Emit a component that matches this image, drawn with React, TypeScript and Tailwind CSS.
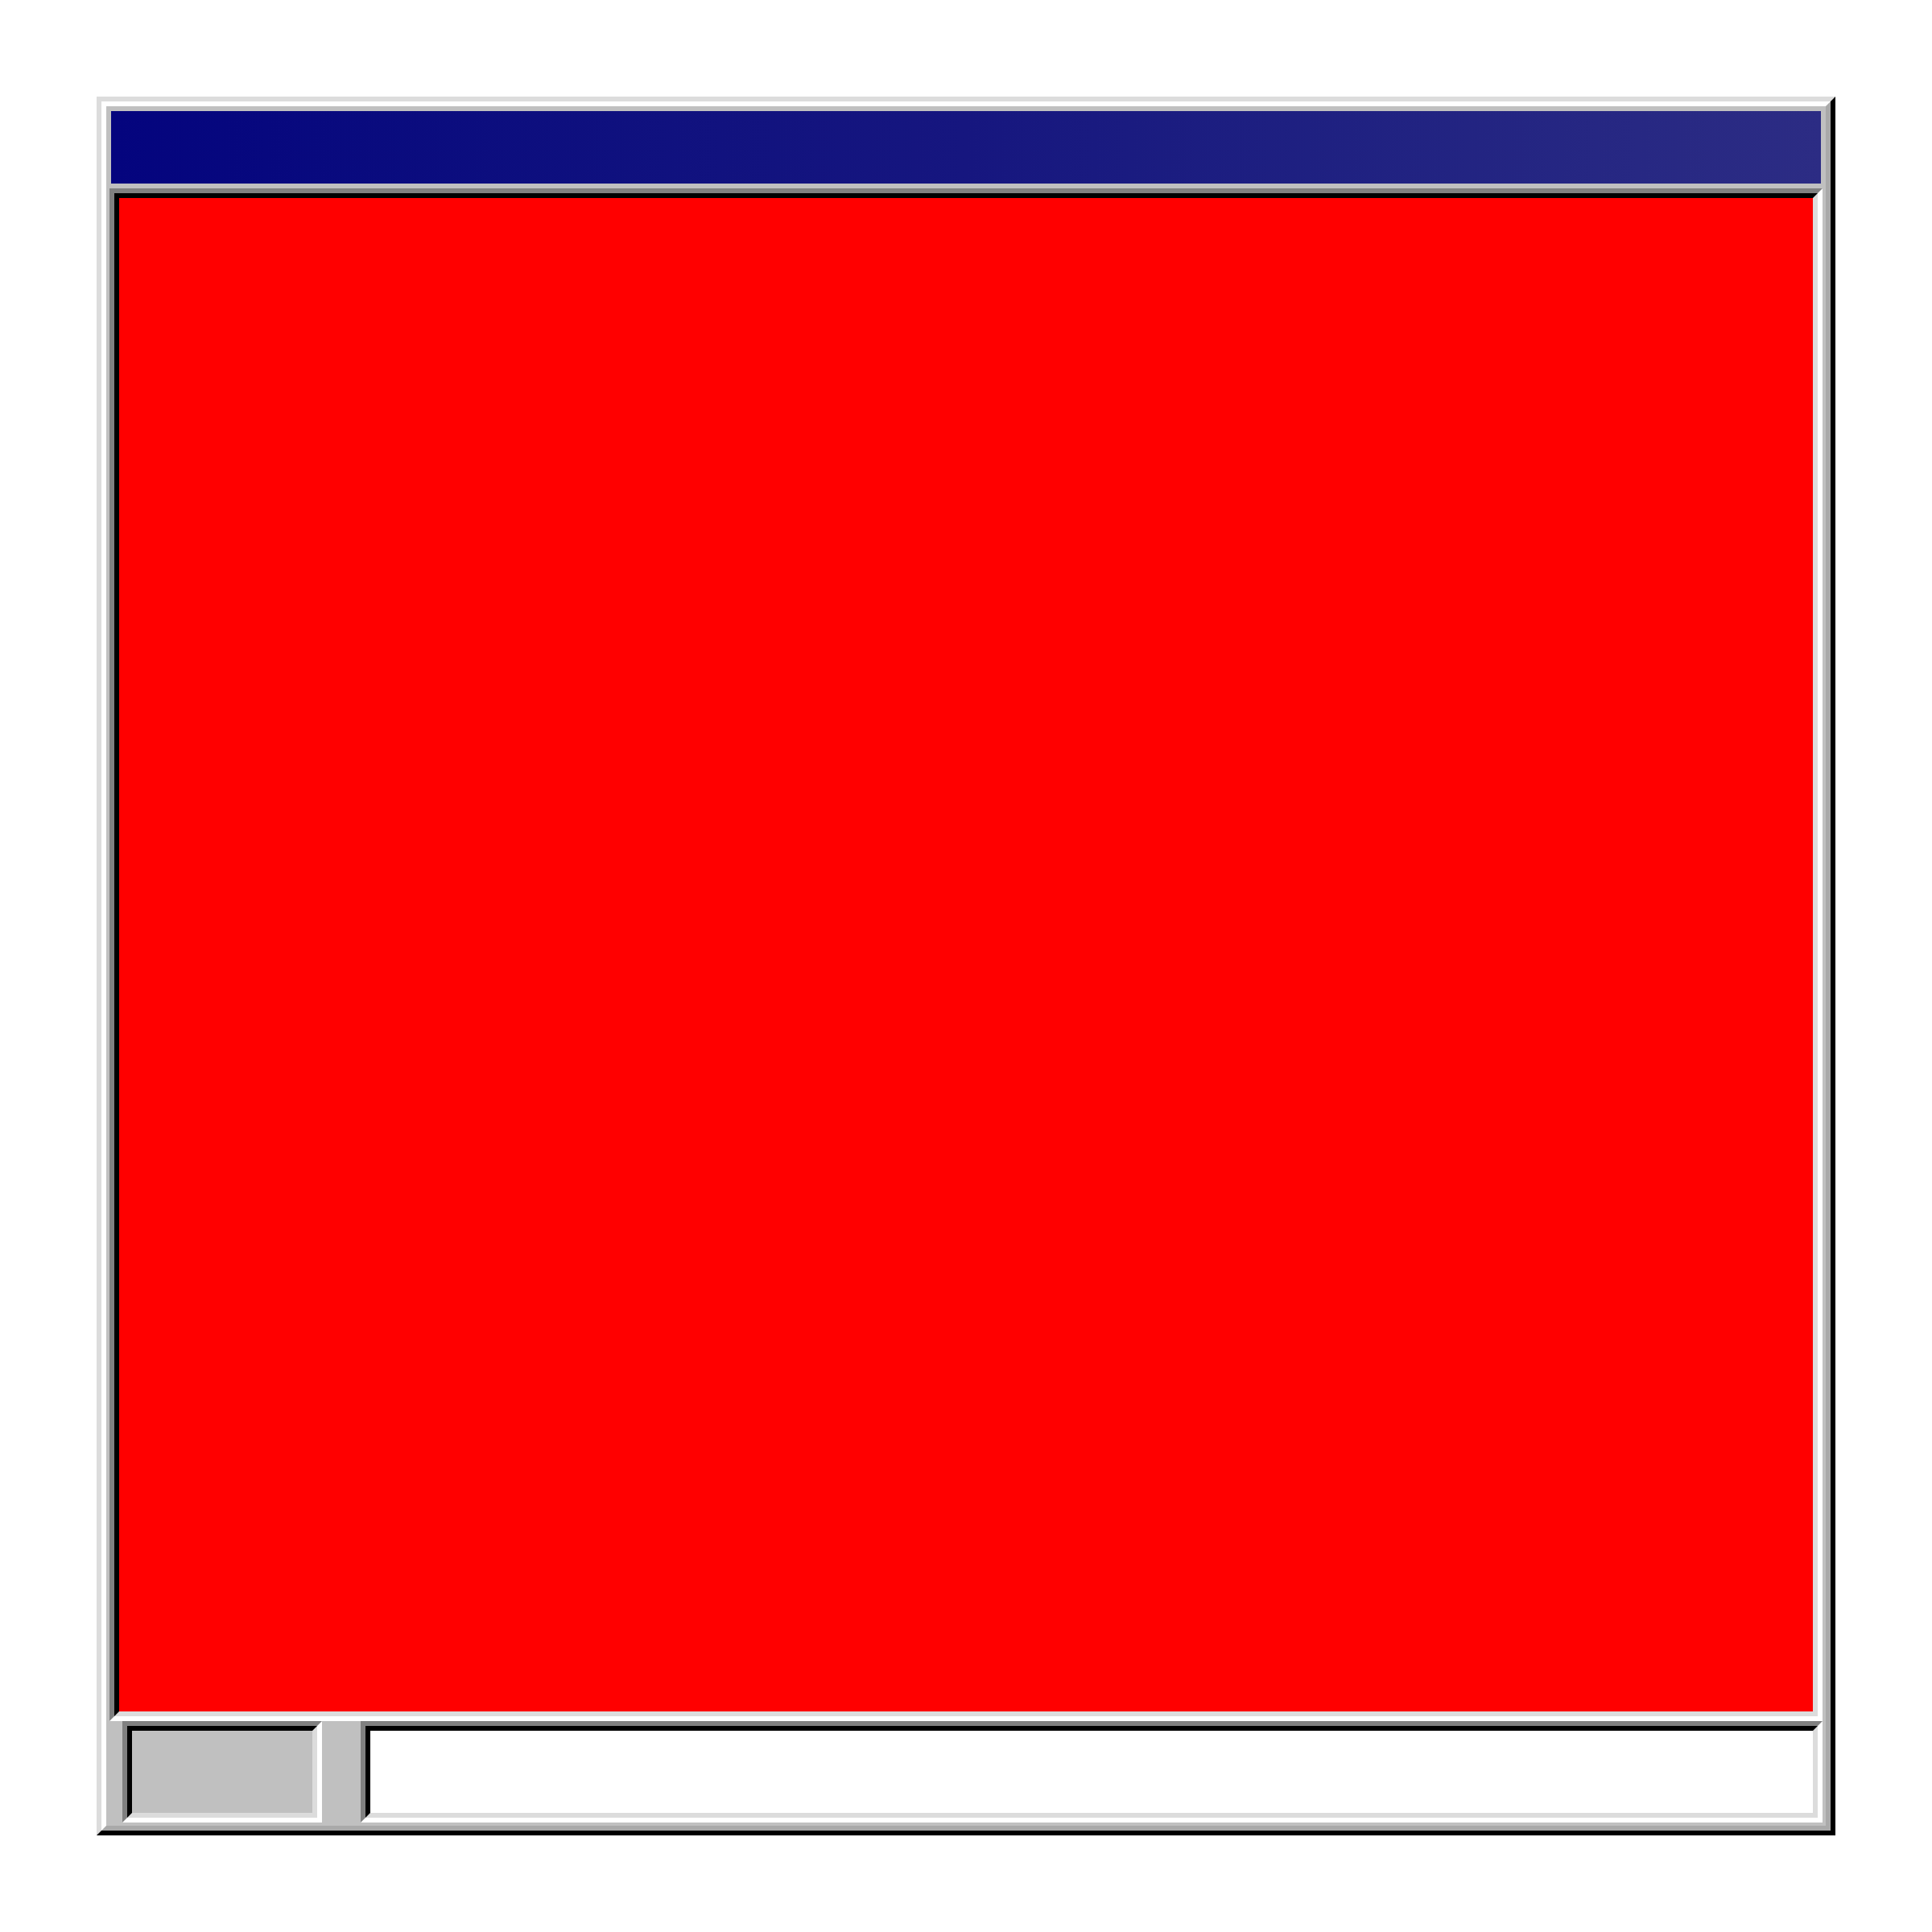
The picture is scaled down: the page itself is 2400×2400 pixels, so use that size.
export default function App() {
  return (
    <div className="min-h-[2400px] w-[2400px] bg-white p-[120px]">
      <div className="h-[2160px] w-[2160px] border-[6px] border-t-[#dcdcdc] border-l-[#dcdcdc] border-r-black border-b-black bg-[#c0c0c0]">
        <div className="flex h-full flex-col border-[6px] border-t-white border-l-white border-r-[#a9a9a9] border-b-[#a9a9a9]">
          {/* title bar */}
          <div className="mx-[6px] mt-[6px] h-[90px] bg-linear-to-r from-[#04047e] via-[#16167f] to-[#2c2c84]" />

          <div className="flex flex-1 flex-col px-[4px] pt-[6px] pb-[4px]">
            {/* client area */}
            <div className="flex-1 border-[6px] border-t-[#808080] border-l-[#808080] border-r-white border-b-white">
              <div className="h-full border-[6px] border-t-black border-l-black border-r-[#dcdcdc] border-b-[#dcdcdc] bg-[#ff0000]" />
            </div>

            {/* status bar */}
            <div className="flex h-[126px] gap-[48px] pl-4">
              <div className="w-[248px] border-[6px] border-t-[#808080] border-l-[#808080] border-r-white border-b-white">
                <div className="h-full border-[6px] border-t-black border-l-black border-r-[#dcdcdc] border-b-[#dcdcdc] bg-[#c0c0c0]" />
              </div>
              <div className="flex-1 border-[6px] border-t-[#808080] border-l-[#808080] border-r-white border-b-white">
                <div className="h-full border-[6px] border-t-black border-l-black border-r-[#dcdcdc] border-b-[#dcdcdc] bg-white" />
              </div>
            </div>
          </div>
        </div>
      </div>
    </div>
  );
}
